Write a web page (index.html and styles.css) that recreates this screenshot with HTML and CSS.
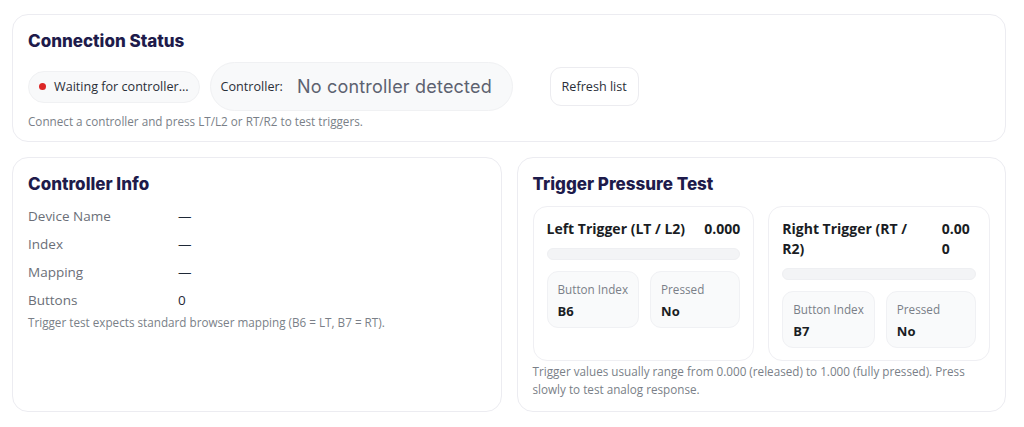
FILE: index.html
```html
<!DOCTYPE html>
<html lang="en">
<head>
<meta charset="utf-8">
<title>Trigger Test</title>
<link rel="stylesheet" href="styles.css">
</head>
<body>
<main class="page">
  <section class="card status-card">
    <h2 class="card-title">Connection Status</h2>
    <div class="status-row">
      <div class="pill status-pill"><span class="dot"></span>Waiting for controller...</div>
      <div class="pill controller-pill"><span class="controller-label">Controller:</span><span class="controller-name">No controller detected</span></div>
      <button class="btn">Refresh list</button>
    </div>
    <p class="hint">Connect a controller and press LT/L2 or RT/R2 to test triggers.</p>
  </section>

  <div class="grid">
    <section class="card">
      <h2 class="card-title">Controller Info</h2>
      <div class="info">
        <div class="info-row"><span class="info-label">Device Name</span><span class="info-value">—</span></div>
        <div class="info-row"><span class="info-label">Index</span><span class="info-value">—</span></div>
        <div class="info-row"><span class="info-label">Mapping</span><span class="info-value">—</span></div>
        <div class="info-row"><span class="info-label">Buttons</span><span class="info-value">0</span></div>
      </div>
      <p class="hint">Trigger test expects standard browser mapping (B6 = LT, B7 = RT).</p>
    </section>

    <section class="card">
      <h2 class="card-title">Trigger Pressure Test</h2>
      <div class="triggers">
        <div class="trigger">
          <div class="trigger-head"><span class="trigger-name">Left Trigger (LT / L2)</span><span class="trigger-value">0.000</span></div>
          <div class="bar"><div class="bar-fill" style="width:0%"></div></div>
          <div class="stats">
            <div class="stat"><div class="stat-label">Button Index</div><div class="stat-value">B6</div></div>
            <div class="stat"><div class="stat-label">Pressed</div><div class="stat-value">No</div></div>
          </div>
        </div>
        <div class="trigger">
          <div class="trigger-head"><span class="trigger-name">Right Trigger (RT / R2)</span><span class="trigger-value">0.000</span></div>
          <div class="bar"><div class="bar-fill" style="width:0%"></div></div>
          <div class="stats">
            <div class="stat"><div class="stat-label">Button Index</div><div class="stat-value">B7</div></div>
            <div class="stat"><div class="stat-label">Pressed</div><div class="stat-value">No</div></div>
          </div>
        </div>
      </div>
      <p class="hint hint-wide">Trigger values usually range from 0.000 (released) to 1.000 (fully pressed). Press slowly to test analog response.</p>
    </section>
  </div>
</main>
</body>
</html>
```

FILE: styles.css
```css
* { box-sizing: border-box; }
html, body { margin: 0; padding: 0; background: #ffffff; }
body {
  font-family: "Open Sans", "Noto Sans", sans-serif;
  color: #1f2937;
}
.page {
  padding: 14px 18px 0 12px;
  display: flex;
  flex-direction: column;
  gap: 15px;
}
.card {
  background: #fff;
  border: 1px solid #ececf1;
  border-radius: 16px;
  padding: 14px 15px 13px;
}
.status-card { padding-bottom: 12px; }
.card-title {
  margin: 0;
  font-family: "Inter", sans-serif;
  font-weight: 800;
  font-size: 17px;
  line-height: 24px;
  color: #1e1b4b;
  letter-spacing: 0;
}
.status-row {
  display: flex;
  align-items: center;
  gap: 10px;
  margin-top: 9px;
}
.pill {
  display: flex;
  align-items: center;
  border-radius: 999px;
  background: #f8f9fa;
  border: 1px solid #f0f1f3;
}
.status-pill {
  height: 32px;
  padding: 0 10px;
  font-size: 12.6px;
  color: #2a2f38;
  gap: 8px;
}
.dot {
  width: 7px;
  height: 7px;
  border-radius: 50%;
  background: #dc2626;
}
.controller-pill {
  height: 49px;
  width: 303px;
  padding: 0 10px;
  gap: 14px;
}
.controller-label { font-size: 12.6px; color: #2a2f38; }
.controller-name {
  font-family: "Inter", sans-serif;
  font-size: 18px;
  color: #5d6270;
  letter-spacing: 0.2px;
}
.btn {
  margin-left: 27px;
  height: 39px;
  padding: 0 11px;
  background: #fff;
  border: 1px solid #ececf0;
  border-radius: 11px;
  font-family: "Open Sans", sans-serif;
  font-size: 12.6px;
  color: #2a2f38;
}
.hint {
  margin: 2px 0 0;
  font-size: 11.7px;
  line-height: 16px;
  color: #7a7f88;
}
.grid {
  display: grid;
  grid-template-columns: 1fr 1fr;
  gap: 15px;
}
.info { margin-top: 6px; }
.info-row {
  display: flex;
  padding: 4px 0;
  font-size: 13.5px;
  line-height: 20px;
}
.info-label { width: 150px; color: #6b6f78; }
.info-value { color: #1f2937; }
.info + .hint { margin-top: 0; }
.triggers {
  margin-top: 10px;
  display: grid;
  grid-template-columns: 1fr 1fr;
  gap: 14px;
}
.trigger {
  border: 1px solid #efeff3;
  border-radius: 14px;
  padding: 12px 13px 12px;
}
.trigger-head {
  display: flex;
  justify-content: space-between;
  gap: 16px;
  font-weight: 700;
  font-size: 14px;
  line-height: 20px;
  color: #1a1d24;
}
.trigger-value { word-break: break-all; }
.bar {
  margin-top: 9px;
  height: 12px;
  border-radius: 999px;
  background: #f3f4f6;
  border: 1px solid #eeeff2;
  overflow: hidden;
}
.bar-fill { height: 100%; background: #4f46e5; }
.stats {
  margin-top: 11px;
  display: grid;
  grid-template-columns: 1fr 1fr;
  gap: 11px;
}
.stat {
  background: #f9fafb;
  border: 1px solid #f0f1f4;
  border-radius: 11px;
  padding: 8px 10px 6px;
}
.stat-label { font-size: 11.7px; line-height: 18px; color: #7a7f88; white-space: nowrap; }
.stat-value { margin-top: 3px; font-size: 13px; line-height: 20px; font-weight: 700; color: #1a1d24; }
.hint-wide { margin-top: 1px; line-height: 18px; }
```
